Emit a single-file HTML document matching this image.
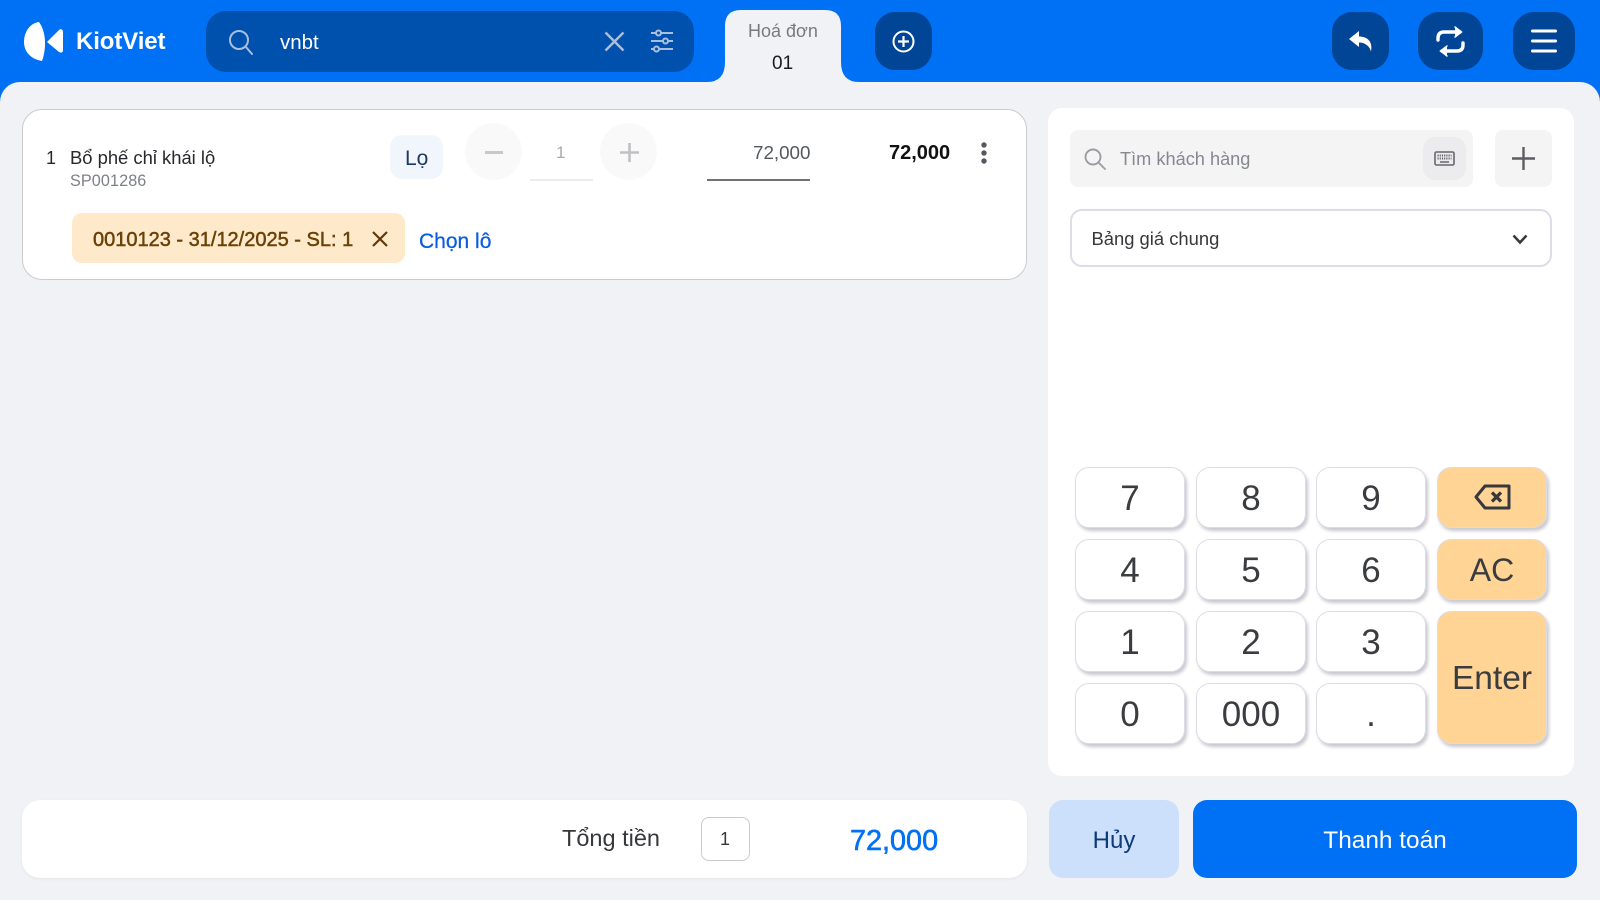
<!DOCTYPE html>
<html lang="vi"><head><meta charset="utf-8"><title>KiotViet</title>
<style>
html,body{margin:0;padding:0;width:1600px;height:900px;overflow:hidden;background:#0070f4;font-family:"Liberation Sans",sans-serif}
.a{position:absolute;box-sizing:border-box}
.t{position:absolute;white-space:nowrap;line-height:1}
.key{position:absolute;box-sizing:border-box;background:#fff;border:1.5px solid #dcdce6;border-radius:14px;box-shadow:2px 3px 3px rgba(120,120,140,.4);color:#3a3c40;font-size:35px;padding-top:2px;display:flex;align-items:center;justify-content:center}
.or{background:#ffd495}
svg{position:absolute;overflow:visible}
</style></head><body>
<div class="a" style="left:0;top:82px;width:1600px;height:818px;background:#f0f2f6;border-radius:20px 20px 0 0"></div>
<svg style="left:0;top:0" width="1600" height="900" viewBox="0 0 1600 900">
<path d="M707 82Q725 82 725 62V26Q725 10 741 10H825Q841 10 841 26V62Q841 82 859 82Z" fill="#f0f2f6"/>
<path d="M39 22C30 23 24 32 24 42C24 51 30 59 42 61C46 50 47 33 39 22Z" fill="#fff"/>
<path d="M47 42L59 30C61 28 63 30 63 32V50C63 53 61 53 59 52Z" fill="#fff"/>
</svg>
<div class="t" style="left:76px;top:30px;font-size:24px;font-weight:700;color:#fff;letter-spacing:-.1px">KiotViet</div>

<div class="a" style="left:206px;top:11px;width:488px;height:61px;background:#0050ad;border-radius:20px"></div>
<svg style="left:228px;top:29px" width="26" height="26" viewBox="0 0 26 26" fill="none" stroke="#a9bfdc" stroke-width="2"><circle cx="11" cy="11" r="9"/><path d="M17.500 17.500L24 25" stroke-linecap="round"/></svg>
<div class="t" style="left:280px;top:33px;font-size:20.500px;color:#fff">vnbt</div>
<svg style="left:604px;top:31px" width="21" height="21" viewBox="0 0 21 21" fill="none" stroke="#a9bfdc" stroke-width="2.400"><path d="M1.500 1.500L19.500 19.500M19.500 1.500L1.500 19.500"/></svg>
<svg style="left:650px;top:29px" width="24" height="24" viewBox="0 0 24 24" fill="none" stroke="#a9bfdc" stroke-width="2"><path d="M1 4H6M11 4H23M1 12H13M18 12H23M1 20H4M9 20H23"/><circle cx="8.500" cy="4" r="2.500"/><circle cx="15.500" cy="12" r="2.500"/><circle cx="6.500" cy="20" r="2.500"/></svg>

<div class="t" style="left:748px;top:22px;font-size:18px;color:#777a80">Hoá đơn</div>
<div class="t" style="left:772px;top:54px;font-size:19px;color:#1c1c1e">01</div>

<div class="a" style="left:875px;top:12px;width:57px;height:58px;background:#004596;border-radius:20px"></div>
<svg style="left:892px;top:30px" width="23" height="23" viewBox="0 0 23 23" fill="none" stroke="#fff" stroke-width="2"><circle cx="11.500" cy="11.500" r="10"/><path d="M11.500 6V17M6 11.500H17" stroke-width="2.200"/></svg>

<div class="a" style="left:1332px;top:12px;width:57px;height:58px;background:#004596;border-radius:20px"></div>
<svg style="left:1349px;top:31px" width="24" height="22" viewBox="0 0 24 22"><path d="M0 8L10 0V5.500C18 5.500 24 10 22 20.500C20.500 15 16 11.500 10 11.500V16Z" fill="#fff"/></svg>
<div class="a" style="left:1418px;top:12px;width:65px;height:58px;background:#004596;border-radius:21px"></div>
<svg style="left:1436px;top:26px" width="30" height="32" viewBox="0 0 30 32" fill="none" stroke="#fff" stroke-width="3.400" stroke-linecap="round"><path d="M2 14V12C2 8 4 6 8 6H24"/><path d="M19 1L25.500 6L19 11" fill="#fff" stroke-width="1.500"/><path d="M27 17V19C27 23 25 25 21 25H6"/><path d="M11 20L4.500 25L11 30" fill="#fff" stroke-width="1.500"/></svg>
<div class="a" style="left:1513px;top:12px;width:62px;height:58px;background:#004596;border-radius:21px"></div>
<svg style="left:1531px;top:29px" width="26" height="24" viewBox="0 0 26 24" stroke="#fff" stroke-width="3" stroke-linecap="round"><path d="M1.500 2H24.500M1.500 12H24.500M1.500 22H24.500"/></svg>

<div class="a" style="left:22px;top:109px;width:1005px;height:171px;background:#fff;border:1.500px solid #c9cbcf;border-radius:20px"></div>
<div class="t" style="left:46px;top:149px;font-size:18px;color:#26282c">1</div>
<div class="t" style="left:70px;top:149px;font-size:18.400px;color:#26282c">Bổ phế chỉ khái lộ</div>
<div class="t" style="left:70px;top:173px;font-size:16.200px;color:#7d8086;letter-spacing:.1px">SP001286</div>
<div class="a" style="left:390px;top:135px;width:53px;height:44px;background:#f1f6fd;border-radius:12px"></div>
<div class="t" style="left:405px;top:148px;font-size:21px;color:#1c3a63">Lọ</div>
<div class="a" style="left:465px;top:123px;width:57px;height:57px;background:#f9f9fa;border-radius:50%"></div>
<svg style="left:485px;top:151px" width="18" height="3"><path d="M0 1.500H18" stroke="#c8c9cc" stroke-width="3"/></svg>
<div class="t" style="left:556px;top:144px;font-size:17px;color:#a8aaae">1</div>
<div class="a" style="left:530px;top:179px;width:63px;height:1.500px;background:#ececee"></div>
<div class="a" style="left:600px;top:123px;width:57px;height:57px;background:#f9f9fa;border-radius:50%"></div>
<svg style="left:619.500px;top:143px" width="19" height="19"><path d="M9.500 0V19M0 9.500H19" stroke="#c0c1c4" stroke-width="2.600"/></svg>
<div class="t" style="left:753px;top:144px;font-size:18.800px;color:#55585e">72,000</div>
<div class="a" style="left:707px;top:179px;width:103px;height:2px;background:#707276"></div>
<div class="t" style="left:889px;top:142.500px;font-size:20px;font-weight:700;color:#111">72,000</div>
<svg style="left:980px;top:142px" width="8" height="22" fill="#55585e"><circle cx="4" cy="3" r="2.700"/><circle cx="4" cy="11" r="2.700"/><circle cx="4" cy="19" r="2.700"/></svg>

<div class="a" style="left:72px;top:213px;width:333px;height:50px;background:#ffe9cb;border-radius:10px"></div>
<div class="t" style="left:93px;top:230px;font-size:20px;color:#6a4208;-webkit-text-stroke:.5px #6a4208">0010123 - 31/12/2025 - SL: 1</div>
<svg style="left:372px;top:231px" width="16" height="16" viewBox="0 0 16 16" fill="none" stroke="#5e3a08" stroke-width="2.200"><path d="M1 1L15 15M15 1L1 15"/></svg>
<div class="t" style="left:419px;top:231px;font-size:21px;color:#0a5ce0;-webkit-text-stroke:.25px #0a5ce0">Chọn lô</div>

<div class="a" style="left:1048px;top:108px;width:526px;height:668px;background:#fff;border-radius:14px"></div>
<div class="a" style="left:1070px;top:130px;width:403px;height:57px;background:#f4f4f5;border-radius:8px"></div>
<svg style="left:1084px;top:148px" width="22" height="22" viewBox="0 0 22 22" fill="none" stroke="#9a9da3" stroke-width="1.900"><circle cx="9" cy="9" r="7.500"/><path d="M14.500 14.500L21 21" stroke-linecap="round"/></svg>
<div class="t" style="left:1120px;top:150px;font-size:18.200px;color:#85888e">Tìm khách hàng</div>
<div class="a" style="left:1423px;top:137px;width:43px;height:43px;background:#ececee;border-radius:12px"></div>
<svg style="left:1434px;top:151px" width="21" height="15" viewBox="0 0 21 15" fill="none" stroke="#65676d"><rect x="1" y="1" width="19" height="13" rx="1.500" stroke-width="1.600"/><path d="M3.500 4.500H17.500M3.500 7.500H17.500" stroke-width="2" stroke-dasharray="1.200 1"/><path d="M6 11H15" stroke-width="1.500"/></svg>
<div class="a" style="left:1495px;top:130px;width:57px;height:57px;background:#f4f4f5;border-radius:8px"></div>
<svg style="left:1512px;top:147px" width="23" height="23"><path d="M11.500 0V23M0 11.500H23" stroke="#5b5d63" stroke-width="2.400"/></svg>

<div class="a" style="left:1070px;top:209px;width:482px;height:58px;background:#fff;border:2px solid #dddce8;border-radius:12px"></div>
<div class="t" style="left:1091.500px;top:230px;font-size:18.400px;color:#36383c">Bảng giá chung</div>
<svg style="left:1512px;top:234px" width="16" height="11" viewBox="0 0 16 11" fill="none" stroke="#36383c" stroke-width="2.500"><path d="M1.500 1.500L8 8.500L14.500 1.500"/></svg>

<div class="key" style="left:1075px;top:467px;width:110px;height:61px">7</div>
<div class="key" style="left:1196px;top:467px;width:110px;height:61px">8</div>
<div class="key" style="left:1316px;top:467px;width:110px;height:61px">9</div>
<div class="key or" style="left:1437px;top:467px;width:110px;height:61px"></div>
<svg style="left:1474px;top:484px" width="38" height="26" viewBox="0 0 38 26" fill="none" stroke="#36383c" stroke-width="3" stroke-linejoin="round"><path d="M11 2H35V24H11L2 13Z"/><path d="M18 8.500L27 17.500M27 8.500L18 17.500" stroke-width="3.300"/></svg>
<div class="key" style="left:1075px;top:539px;width:110px;height:61px">4</div>
<div class="key" style="left:1196px;top:539px;width:110px;height:61px">5</div>
<div class="key" style="left:1316px;top:539px;width:110px;height:61px">6</div>
<div class="key or" style="left:1437px;top:539px;width:110px;height:61px;font-size:32px">AC</div>
<div class="key" style="left:1075px;top:611px;width:110px;height:61px">1</div>
<div class="key" style="left:1196px;top:611px;width:110px;height:61px">2</div>
<div class="key" style="left:1316px;top:611px;width:110px;height:61px">3</div>
<div class="key or" style="left:1437px;top:611px;width:110px;height:133px;font-size:33.500px">Enter</div>
<div class="key" style="left:1075px;top:683px;width:110px;height:61px">0</div>
<div class="key" style="left:1196px;top:683px;width:110px;height:61px">000</div>
<div class="key" style="left:1316px;top:683px;width:110px;height:61px">.</div>

<div class="a" style="left:22px;top:800px;width:1005px;height:78px;background:#fff;border-radius:18px;box-shadow:0 1px 3px rgba(0,0,0,.06)"></div>
<div class="t" style="left:562px;top:827px;font-size:23.500px;color:#36383c">Tổng tiền</div>
<div class="a" style="left:701px;top:817px;width:49px;height:44px;background:#fff;border:1.500px solid #c9cbcf;border-radius:8px"></div>
<div class="t" style="left:720px;top:830px;font-size:18px;color:#36383c">1</div>
<div class="t" style="left:850px;top:827px;font-size:28.800px;font-weight:500;color:#0070f4;-webkit-text-stroke:.6px #0070f4">72,000</div>

<div class="a" style="left:1049px;top:800px;width:130px;height:78px;background:#cce0fc;border-radius:14px;color:#0d3a78;font-size:24px;padding-top:3px;display:flex;align-items:center;justify-content:center">Hủy</div>
<div class="a" style="left:1193px;top:800px;width:384px;height:78px;background:#0070f4;border-radius:14px;color:#fff;font-size:24.400px;padding-top:3px;display:flex;align-items:center;justify-content:center">Thanh toán</div>
</body></html>
